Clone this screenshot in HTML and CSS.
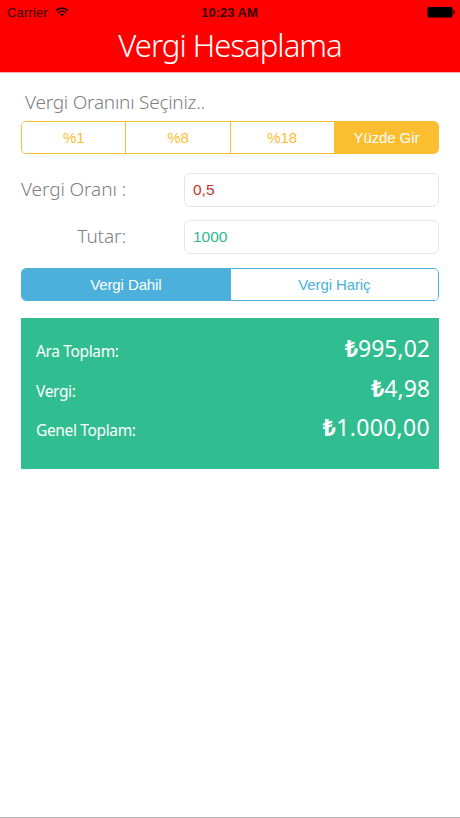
FILE: index.html
```html
<!DOCTYPE html>
<html lang="tr">

<head>
  <meta charset="utf-8">
  <title>Vergi Hesaplama</title>
  <link rel="stylesheet" href="styles.css">
</head>

<body>
  <header class="header">
    <div class="status">
      <div class="carrier">
        <span>Carrier</span>
        <svg class="wifi" width="14" height="10" viewBox="0 0 14 10">
          <path d="M1 3.7C4.4 .3 9.6 .3 13 3.7" />
          <path d="M3.1 5.9c2.2-2.2 5.6-2.2 7.8 0" />
          <path class="dot" d="M7 9.8L4.9 7.5c1.2-1.1 3-1.1 4.2 0z" />
        </svg>
      </div>
      <b class="time">10:23 AM</b>
      <svg class="battery" width="28" height="11" viewBox="0 0 28 11">
        <rect x="0.5" y="0" width="25" height="10.4" rx="1.5" />
        <path d="M26.2 3.2c2 .6 2 3.4 0 4z" />
      </svg>
    </div>
    <h1>Vergi Hesaplama</h1>
  </header>

  <div class="container">
    <h2>Vergi Oranını Seçiniz..</h2>
    <div class="segments yellow">
      <button type="button">%1</button>
      <button type="button">%8</button>
      <button type="button">%18</button>
      <button type="button" class="active">Yüzde Gir</button>
    </div>

    <div class="row">
      <label for="rate">Vergi Oranı :</label>
      <input type="text" id="rate" class="rate" value="0,5">
    </div>
    <div class="row">
      <label for="amount">Tutar:</label>
      <input type="text" id="amount" class="amount" value="1000">
    </div>

    <div class="segments blue">
      <button type="button" class="active">Vergi Dahil</button>
      <button type="button">Vergi Hariç</button>
    </div>

    <div class="result">
      <div class="line">
        <span>Ara Toplam:</span>
        <span class="value"><b>₺</b>995,02</span>
      </div>
      <div class="line">
        <span>Vergi:</span>
        <span class="value"><b>₺</b>4,98</span>
      </div>
      <div class="line">
        <span>Genel Toplam:</span>
        <span class="value total"><b>₺</b>1.000,00</span>
      </div>
    </div>
  </div>
</body>

</html>
```
FILE: styles.css
```css
* {
  box-sizing: border-box;
}

body {
  margin: 0;
  height: 818px;
  background-color: white;
  border-bottom: 1px solid #b2b2b2;
  font-family: "Liberation Sans", Arial, sans-serif;
}

.header {
  height: 73px;
  background-color: red;
  border-bottom: 1px solid #ffb0b0;
}

.status {
  display: grid;
  grid-template-columns: 1fr auto 1fr;
  align-items: center;
  height: 24px;
  padding: 0 5px 0 7px;
  font-size: 13px;
  color: #300;
}

.carrier {
  display: flex;
  align-items: center;
  gap: 7px;
  letter-spacing: 0.15px;
}

.wifi {
  fill: none;
  stroke: #200;
  stroke-width: 1.7;
}

.wifi .dot {
  fill: #200;
  stroke: none;
}

.time {
  margin-right: 3px;
}

.battery {
  justify-self: end;
}

h1 {
  margin: 0;
  font-family: "Noto Sans", sans-serif;
  font-size: 31px;
  font-weight: 300;
  letter-spacing: -0.95px;
  line-height: 42px;
  text-align: center;
  color: white;
}

.container {
  padding: 17px 21px 0 21px;
}

h2 {
  margin: 0 0 7px 4px;
  font-family: "Noto Sans", sans-serif;
  font-size: 19px;
  font-weight: 300;
  letter-spacing: -0.25px;
  line-height: 24px;
  color: #808080;
}

.segments {
  display: flex;
  height: 33px;
  border: 1px solid;
  border-radius: 5px;
  overflow: hidden;
}

.segments button {
  width: 100%;
  padding: 0;
  border: none;
  border-left: 1px solid;
  background-color: white;
  font-family: inherit;
  font-size: 15px;
  letter-spacing: -0.1px;
  color: inherit;
}

.segments button:first-child {
  border-left: none;
}

.yellow {
  margin-bottom: 19px;
  color: #fabe30;
}

.yellow button.active {
  border-color: #fabe30;
  background-color: #fabe30;
  color: white;
}

.blue {
  margin: 14px 0 17px 0;
  color: #4bb0dc;
}

.blue button.active {
  background-color: #4bb0dc;
  color: white;
}

.row {
  display: flex;
  align-items: center;
  height: 34px;
  margin-bottom: 13px;
}

.row label {
  width: 105px;
  margin-right: 58px;
  padding-bottom: 3px;
  font-family: "Noto Sans", sans-serif;
  font-size: 19px;
  font-weight: 300;
  letter-spacing: -0.1px;
  line-height: 24px;
  text-align: right;
  white-space: nowrap;
  color: #808080;
}

.row input {
  flex: 1;
  height: 34px;
  padding: 0 8px;
  border: 1px solid #e6e6e6;
  border-radius: 6px;
  font-family: inherit;
  font-size: 15.5px;
}

.rate {
  color: #c0392b;
}

.amount {
  color: #2dbb8d;
}

.result {
  height: 151px;
  padding: 14px 9px 0 15px;
  background-color: #30bd8f;
  font-family: "Noto Sans", sans-serif;
  font-size: 15.5px;
  letter-spacing: -0.35px;
  color: white;
}

.line {
  display: flex;
  justify-content: space-between;
  align-items: baseline;
  height: 39.5px;
}

.value {
  font-size: 23px;
  letter-spacing: 0;
  line-height: 32px;
}

.total {
  letter-spacing: 0.3px;
}
```
